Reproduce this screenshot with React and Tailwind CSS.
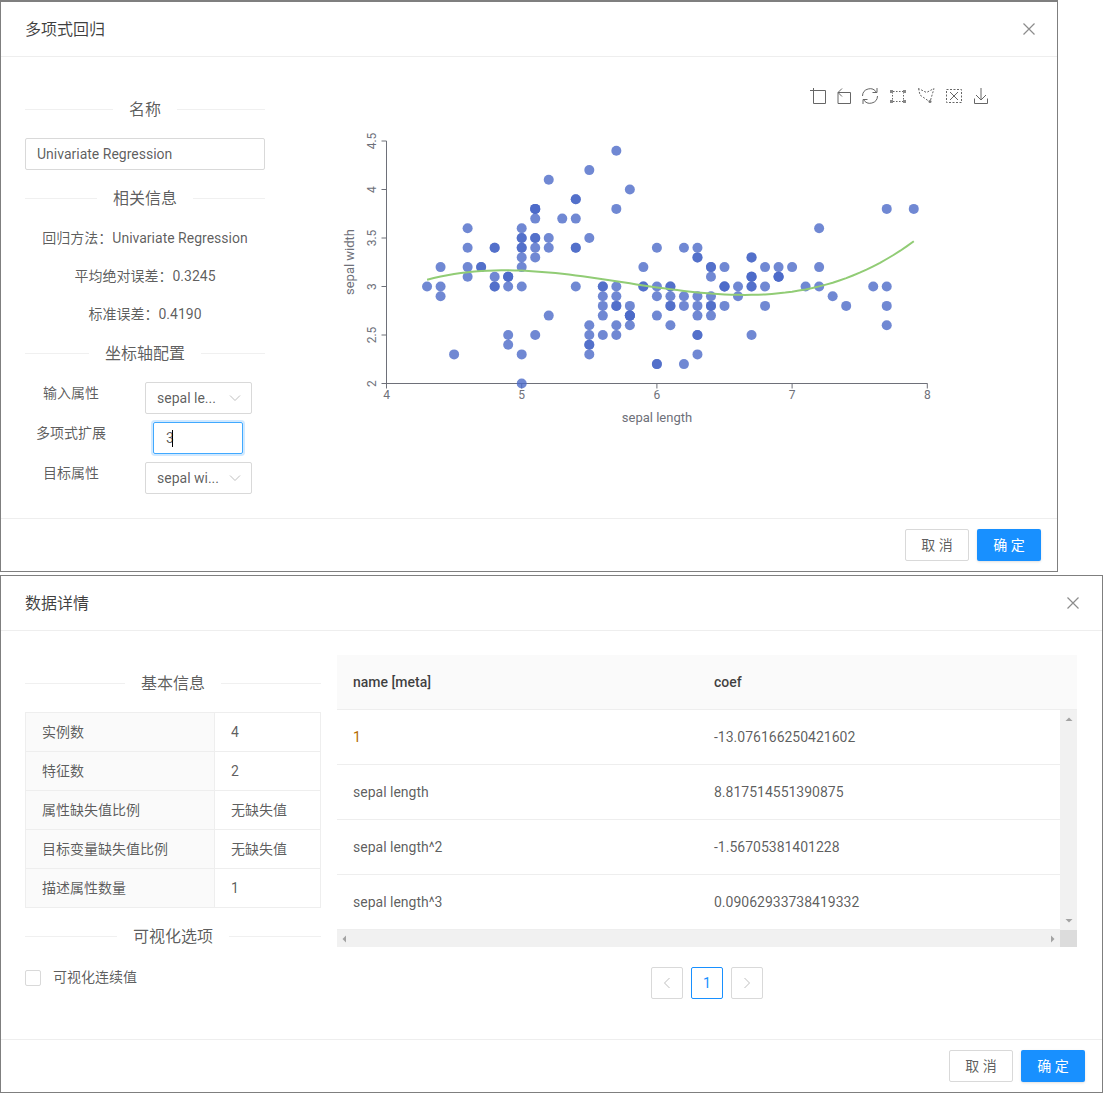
const RAW =
  "5.1,3.5;4.9,3;4.7,3.2;4.6,3.1;5,3.6;5.4,3.9;4.6,3.4;5,3.4;4.4,2.9;4.9,3.1;5.4,3.7;4.8,3.4;4.8,3;4.3,3;5.8,4;5.7,4.4;5.4,3.9;5.1,3.5;5.7,3.8;5.1,3.8;5.4,3.4;5.1,3.7;4.6,3.6;5.1,3.3;4.8,3.4;5,3;5,3.4;5.2,3.5;5.2,3.4;4.7,3.2;4.8,3.1;5.4,3.4;5.2,4.1;5.5,4.2;4.9,3.1;5,3.2;5.5,3.5;4.9,3.1;4.4,3;5.1,3.4;5,3.5;4.5,2.3;4.4,3.2;5,3.5;5.1,3.8;4.8,3;5.1,3.8;4.6,3.2;5.3,3.7;5,3.3;" +
  "7,3.2;6.4,3.2;6.9,3.1;5.5,2.3;6.5,2.8;5.7,2.8;6.3,3.3;4.9,2.4;6.6,2.9;5.2,2.7;5,2;5.9,3;6,2.2;6.1,2.9;5.6,2.9;6.7,3.1;5.6,3;5.8,2.7;6.2,2.2;5.6,2.5;5.9,3.2;6.1,2.8;6.3,2.5;6.1,2.8;6.4,2.9;6.6,3;6.8,2.8;6.7,3;6,2.9;5.7,2.6;5.5,2.4;5.5,2.4;5.8,2.7;6,2.7;5.4,3;6,3.4;6.7,3.1;6.3,2.3;5.6,3;5.5,2.5;5.5,2.6;6.1,3;5.8,2.6;5,2.3;5.6,2.7;5.7,3;5.7,2.9;6.2,2.9;5.1,2.5;5.7,2.8;" +
  "6.3,3.3;5.8,2.7;7.1,3;6.3,2.9;6.5,3;7.6,3;4.9,2.5;7.3,2.9;6.7,2.5;7.2,3.6;6.5,3.2;6.4,2.7;6.8,3;5.7,2.5;5.8,2.8;6.4,3.2;6.5,3;7.7,3.8;7.7,2.6;6,2.2;6.9,3.2;5.6,2.8;7.7,2.8;6.3,2.7;6.7,3.3;7.2,3.2;6.2,2.8;6.1,3;6.4,2.8;7.2,3;7.4,2.8;7.9,3.8;6.4,2.8;6.3,2.8;6.1,2.6;7.7,3;6.3,3.4;6.4,3.1;6,3;6.9,3.1;6.7,3.1;6.9,3.1;5.8,2.7;6.8,3.2;6.7,3.3;6.7,3;6.3,2.5;6.5,3;6.2,3.4;5.9,3";

const POINTS = RAW.split(";").map((p) => p.split(",").map(Number));

const sx = (v) => 386.5 + (v - 4) * 135.2;
const sy = (v) => 383.5 - (v - 2) * 97;

const CURVE = Array.from({ length: 73 }, (_, i) => {
  const x = 4.3 + i * 0.05;
  const y = -13.076166 + 8.817515 * x - 1.567054 * x * x + 0.090629 * x * x * x;
  return `${sx(x).toFixed(1)},${sy(y).toFixed(1)}`;
}).join(" ");

const ScatterChart = () => (
  <svg width="700" height="360" viewBox="337 80 700 360" className="block">
    <g fill="none" stroke="#666" strokeWidth="1">
      {/* toolbox */}
      <path d="M810 90.5H825.5V103.5H813.5V88" />
      <path d="M838 92.5H850.5V103.5H838V93M842 88.5L838 92.5L842 96.5" />
      <path d="M862.5 96A7.5 7.5 0 0 1 876.5 92.5M877.5 96A7.5 7.5 0 0 1 863.5 99.5M877 88V92.5H872.5M863 104V99.5H867.5" />
      <path d="M893 91.5H903M893 101.5H903M892.5 92V101M903.5 92V101" strokeDasharray="1.5 1.5" />
      <path d="M890 90h3v3h-3zM903 90h3v3h-3zM890 100h3v3h-3zM903 100h3v3h-3z" stroke="none" fill="#888" />
      <path d="M918.5 88.5L920 95L930 102L934 88.5L926.5 92.5Z" strokeDasharray="2 1.5" />
      <circle cx="930" cy="101.5" r="1.5" fill="#777" stroke="none" />
      <path d="M946.5 89.5H961.5V102.5H946.5Z" strokeDasharray="2 1.5" />
      <path d="M950 92L958 100M958 92L950 100" />
      <path d="M981 88V100M976 95L981 100L986 95M974.5 98.5V103.5H987.5V98.5" />

      {/* axes */}
      <path d="M386.5 141V388M382 383.5H927.5" stroke="#6e7079" />
      {[2, 2.5, 3, 3.5, 4, 4.5].map((t) => (
        <path key={t} d={`M381.5 ${sy(t)}H386.5`} stroke="#6e7079" />
      ))}
      {[4, 5, 6, 7, 8].map((t) => (
        <path key={t} d={`M${sx(t)} 383.5V388.5`} stroke="#6e7079" />
      ))}
    </g>

    <g fill="#6e7079" fontSize="12">
      {[4, 5, 6, 7, 8].map((t) => (
        <text key={t} x={sx(t)} y="399" textAnchor="middle">
          {t}
        </text>
      ))}
      {[2, 2.5, 3, 3.5, 4, 4.5].map((t) => (
        <text
          key={t}
          textAnchor="middle"
          transform={`translate(376 ${sy(t)}) rotate(-90)`}
        >
          {t}
        </text>
      ))}
      <text x="657" y="422" textAnchor="middle" fontSize="13">
        sepal length
      </text>
      <text textAnchor="middle" fontSize="13" transform="translate(354 262) rotate(-90)">
        sepal width
      </text>
    </g>

    {POINTS.map(([x, y], idx) => (
      <circle key={idx} cx={sx(x)} cy={sy(y)} r="5" fill="#4c6ac8" fillOpacity="0.8" />
    ))}
    <polyline points={CURVE} fill="none" stroke="#91cc75" strokeWidth="2" />
  </svg>
);

const Divider = ({ title, className = "" }) => (
  <div className={`flex h-6 items-center gap-4 text-base text-black/65 ${className}`}>
    <div className="h-px flex-1 bg-[#f0f0f0]" />
    <span className="pt-0.5">{title}</span>
    <div className="h-px flex-1 bg-[#f0f0f0]" />
  </div>
);

const CloseIcon = () => (
  <svg width="14" height="14" viewBox="0 0 14 14" fill="none" stroke="#8c8c8c" strokeWidth="1.2">
    <path d="M1.5 1.5L12.5 12.5M12.5 1.5L1.5 12.5" />
  </svg>
);

const Header = ({ title, className }) => (
  <div className={`flex h-[55px] shrink-0 items-center justify-between border-b border-[#eeeeee] pl-6 ${className}`}>
    <span className="pt-0.5 text-base text-black/75">{title}</span>
    <CloseIcon />
  </div>
);

const Footer = ({ pr }) => (
  <div className={`flex h-[53px] shrink-0 items-start justify-end gap-2 border-t border-[#eeeeee] pt-2.5 ${pr}`}>
    <button className="h-8 w-16 rounded-[2px] border border-[#d9d9d9] bg-white text-sm text-black/65">
      取 消
    </button>
    <button className="h-8 w-16 rounded-[2px] bg-[#1890ff] text-sm text-white shadow-sm">
      确 定
    </button>
  </div>
);

const Select = ({ value }) => (
  <div className="flex h-8 w-[107px] items-center justify-between rounded-[2px] border border-[#d9d9d9] bg-white pr-2.5 pl-[11px] text-sm text-black/65">
    <span>{value}</span>
    <svg width="12" height="8" viewBox="0 0 12 8" fill="none" stroke="#bfbfbf">
      <path d="M1 1.5L6 6.5L11 1.5" />
    </svg>
  </div>
);

const AxisRow = ({ label, children }) => (
  <div className="flex h-8 items-center">
    <div className="w-[92px] pb-2.5 text-center text-sm text-black/65">{label}</div>
    <div className="ml-7 w-[107px]">{children}</div>
  </div>
);

const STATS = [
  ["实例数", "4"],
  ["特征数", "2"],
  ["属性缺失值比例", "无缺失值"],
  ["目标变量缺失值比例", "无缺失值"],
  ["描述属性数量", "1"],
];

const COEFS = [
  ["1", "-13.076166250421602"],
  ["sepal length", "8.817514551390875"],
  ["sepal length^2", "-1.56705381401228"],
  ["sepal length^3", "0.09062933738419332"],
];

const Triangle = ({ d, className = "" }) => (
  <svg width="8" height="8" viewBox="0 0 8 8" className={className}>
    <path d={d} fill="#a3a3a3" />
  </svg>
);

const PageButton = ({ children, active }) => (
  <div
    className={`flex size-8 items-center justify-center rounded-[2px] border text-sm ${
      active ? "border-[#1890ff] text-[#1890ff]" : "border-[#d9d9d9]"
    }`}
  >
    {children}
  </div>
);

const App = () => {
  return (
    <div className="w-[1104px] bg-white font-['Roboto','Noto_Sans_CJK_SC',sans-serif]">
      <section className="flex h-[572px] w-[1058px] flex-col border border-t-2 border-[#7f7f7f]">
        <Header title="多项式回归" className="pr-[21px]" />
        <div className="flex flex-1 pt-[23px] pl-6">
          <div className="w-60 pt-[17px]">
            <Divider title="名称" />
            <div className="mt-[17px] flex h-8 items-center rounded-[2px] border border-[#d9d9d9] px-[11px] text-sm text-black/65">
              Univariate Regression
            </div>
            <Divider title="相关信息" className="mt-4" />
            <div className="mt-[17px] flex flex-col gap-4 text-center text-sm leading-[22px] text-black/65">
              <p>回归方法：Univariate Regression</p>
              <p>平均绝对误差：0.3245</p>
              <p>标准误差：0.4190</p>
            </div>
            <Divider title="坐标轴配置" className="mt-4" />
            <div className="mt-[17px] flex flex-col gap-2">
              <AxisRow label="输入属性">
                <Select value="sepal le..." />
              </AxisRow>
              <AxisRow label="多项式扩展">
                <div className="ml-2 flex h-8 w-[90px] items-center rounded-[2px] border border-[#40a9ff] px-3 text-sm text-black/65 shadow-[0_0_0_2px_rgba(24,144,255,0.2)]">
                  3<span className="-ml-0.5 h-[17px] w-px bg-black" />
                </div>
              </AxisRow>
              <AxisRow label="目标属性">
                <Select value="sepal wi..." />
              </AxisRow>
            </div>
          </div>
          <div className="ml-[72px]">
            <ScatterChart />
          </div>
        </div>
        <Footer pr="pr-4" />
      </section>

      <section className="mt-[3px] flex h-[518px] w-[1103px] flex-col border border-[#7f7f7f]">
        <Header title="数据详情" className="pr-[22px]" />
        <div className="flex flex-1 gap-4 pt-6 pl-6">
          <div className="w-[296px] pt-4">
            <Divider title="基本信息" />
            <div className="mt-[17px] border border-b-0 border-[#eeeeee] text-sm text-black/65">
              {STATS.map(([label, value]) => (
                <div key={label} className="flex h-[39px] border-b border-[#eeeeee]">
                  <div className="flex w-[189px] items-center border-r border-[#eeeeee] bg-[#fafafa] pl-4">
                    {label}
                  </div>
                  <div className="flex flex-1 items-center pl-4">{value}</div>
                </div>
              ))}
            </div>
            <Divider title="可视化选项" className="mt-4" />
            <label className="mt-[19px] flex items-center gap-3 text-sm text-black/65">
              <span className="size-4 rounded-[2px] border border-[#d9d9d9] bg-white" />
              <span className="pb-0.5">可视化连续值</span>
            </label>
          </div>

          <div className="w-[740px]">
            <div className="flex h-[55px] items-center border-b border-[#eeeeee] bg-[#fafafa] text-sm font-medium text-black/75">
              <div className="w-[361px] pl-4">name [meta]</div>
              <div className="pl-4">coef</div>
            </div>
            <div className="flex h-[220px]">
              <div className="flex-1 overflow-hidden text-sm text-black/65">
                {COEFS.map(([name, coef], idx) => (
                  <div key={name} className="flex h-[55px] items-center border-b border-[#eeeeee]">
                    <div className={`w-[361px] pl-4 ${idx === 0 ? "text-[#b36b00]" : ""}`}>{name}</div>
                    <div className="pl-4">{coef}</div>
                  </div>
                ))}
              </div>
              <div className="flex w-[17px] flex-col items-center justify-between bg-[#f1f1f1] py-1.5">
                <Triangle d="M4 1.5L7.5 5H0.5Z" />
                <Triangle d="M4 6.5L7.5 3H0.5Z" />
              </div>
            </div>
            <div className="flex h-[17px]">
              <div className="flex flex-1 items-center justify-between bg-[#f1f1f1] px-1">
                <Triangle d="M1.5 4L5 0.5V7.5Z" />
                <Triangle d="M6.5 4L3 0.5V7.5Z" />
              </div>
              <div className="w-[17px] bg-[#dcdcdc]" />
            </div>
            <div className="mt-5 flex gap-2 pl-[314px]">
              <PageButton>
                <svg width="8" height="12" viewBox="0 0 8 12" fill="none" stroke="#bfbfbf">
                  <path d="M6.5 1L1.5 6L6.5 11" />
                </svg>
              </PageButton>
              <PageButton active>1</PageButton>
              <PageButton>
                <svg width="8" height="12" viewBox="0 0 8 12" fill="none" stroke="#bfbfbf">
                  <path d="M1.5 1L6.5 6L1.5 11" />
                </svg>
              </PageButton>
            </div>
          </div>
        </div>
        <Footer pr="pr-[17px]" />
      </section>
    </div>
  );
};

export default App;
